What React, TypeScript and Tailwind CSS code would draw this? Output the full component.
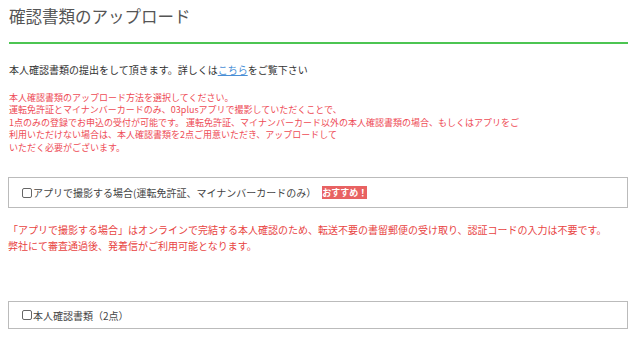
import React from "react";

const Box = () => (
  <span className="inline-block w-[10px] h-[10px] border border-[#666] rounded-[2px] bg-white shrink-0" />
);

export default function App() {
  return (
    <div className="w-[640px] h-[344px] bg-white pl-[8px] pr-[12px] overflow-hidden font-['Noto_Sans_CJK_JP',sans-serif]">
      <h1 className="pt-[6px] pl-px text-[16.5px] leading-[20px] text-[#555] font-normal">
        確認書類のアップロード
      </h1>
      <div className="mt-[16px] ml-px h-[2px] bg-[#4cc552]" />
      <p className="mt-[19px] pl-px text-[10px] leading-[14px] text-[#333]">
        本人確認書類の提出をして頂きます。詳しくは
        <span className="text-[#4a8fd6] underline">こちら</span>
        をご覧下さい
      </p>
      <p className="mt-[15px] pl-px text-[9px] leading-[12.4px] text-[#ee4b55]">
        本人確認書類のアップロード方法を選択してください。
        <br />
        運転免許証とマイナンバーカードのみ、03plusアプリで撮影していただくことで、
        <br />
        1点のみの登録でお申込の受付が可能です。 運転免許証、マイナンバーカード以外の本人確認書類の場合、もしくはアプリをご
        <br />
        利用いただけない場合は、本人確認書類を2点ご用意いただき、アップロードして
        <br />
        いただく必要がございます。
      </p>
      <div className="mt-[23px] h-[31px] border border-[#bbb] flex items-center pl-[13px] text-[10px] text-[#444]">
        <Box />
        <span className="ml-px whitespace-nowrap">アプリで撮影する場合(運転免許証、マイナンバーカードのみ）</span>
        <span className="ml-[6px] w-[45px] h-[13px] bg-[#e86262] text-white font-bold text-[9px] leading-[13px] whitespace-nowrap flex items-center justify-center">
          おすすめ！
        </span>
      </div>
      <p className="mt-[14px] text-[10px] leading-[16px] text-[#e8433f]">
        「アプリで撮影する場合」はオンラインで完結する本人確認のため、転送不要の書留郵便の受け取り、認証コードの入力は不要です。
        <br />
        弊社にて審査通過後、発着信がご利用可能となります。
      </p>
      <div className="mt-[47px] h-[28px] border border-[#bbb] flex items-center pl-[13px] text-[10px] text-[#444]">
        <Box />
        <span className="ml-px">本人確認書類（2点）</span>
      </div>
    </div>
  );
}
